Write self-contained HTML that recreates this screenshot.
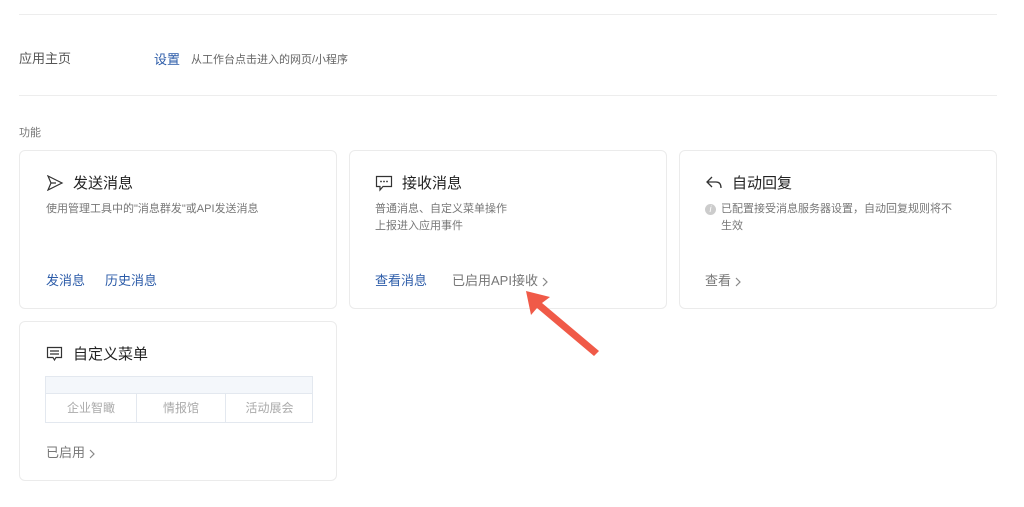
<!DOCTYPE html><html><head><meta charset="utf-8"><style>
body{margin:0;width:1024px;height:507px;background:#fff;font-family:"Liberation Sans","Noto Sans CJK SC",sans-serif;position:relative;overflow:hidden}
.a{position:absolute;white-space:nowrap}
.line{position:absolute;left:19px;width:978px;height:1px;background:#ededed}
.card{position:absolute;border:1px solid #ebebeb;border-radius:6px;box-sizing:border-box;width:318px}
.t{font-size:15px;color:#222}
.d{font-size:11px;color:#777;line-height:17px}
.l{font-size:13px;color:#2b5ba8}
.g{font-size:13px;color:#777}
.cv{display:inline-block;vertical-align:middle;margin-left:4px}
.cell{position:absolute;top:16px;height:30px;line-height:30px;text-align:center;font-size:12px;color:#aaa;border-left:1px solid #e3e8ef;box-sizing:border-box}
</style></head><body>
<div class="line" style="top:14px"></div>
<div class="line" style="top:95px"></div>
<div class="a" style="left:19px;top:48px;font-size:13px;color:#555">应用主页</div>
<div class="a" style="left:154px;top:49px;font-size:13px;color:#2b5ba8">设置</div>
<div class="a" style="left:191px;top:51px;font-size:11px;color:#666">从工作台点击进入的网页/小程序</div>
<div class="a" style="left:19px;top:124px;font-size:11px;color:#777">功能</div>

<div class="card" style="left:19px;top:150px;height:159px"></div>
<svg class="a" style="left:46px;top:175px" width="18" height="16" viewBox="0 0 18 16"><path d="M2 1 L16 8 L2 15 L5 8 Z M5 8 H10" fill="none" stroke="#333" stroke-width="1.2"/></svg>
<div class="a t" style="left:73px;top:172px">发送消息</div>
<div class="a d" style="left:46px;top:201px">使用管理工具中的"消息群发"或API发送消息</div>
<div class="a l" style="left:46px;top:270px">发消息</div>
<div class="a l" style="left:105px;top:270px">历史消息</div>

<div class="card" style="left:349px;top:150px;height:159px"></div>
<svg class="a" style="left:375px;top:175px" width="18" height="17" viewBox="0 0 18 17"><path d="M1.5 1.5 H16.5 V11.5 H8 L5 15 V11.5 H1.5 Z" fill="none" stroke="#333" stroke-width="1.2"/><circle cx="6" cy="6.5" r=".9" fill="#333"/><circle cx="9" cy="6.5" r=".9" fill="#333"/><circle cx="12" cy="6.5" r=".9" fill="#333"/></svg>
<div class="a t" style="left:402px;top:172px">接收消息</div>
<div class="a d" style="left:375px;top:201px">普通消息、自定义菜单操作<br>上报进入应用事件</div>
<div class="a l" style="left:375px;top:270px">查看消息</div>
<div class="a g" style="left:452px;top:270px">已启用API接收<svg class="cv" width="6" height="10" viewBox="0 0 6 10"><path d="M1 1 L5 5 L1 9" fill="none" stroke="#888" stroke-width="1.2"/></svg></div>

<div class="card" style="left:679px;top:150px;height:159px"></div>
<svg class="a" style="left:705px;top:175px" width="18" height="16" viewBox="0 0 18 16"><path d="M7 2 L2 7 L7 12 M2 7 H11 Q16 7 16 13" fill="none" stroke="#333" stroke-width="1.3"/></svg>
<div class="a t" style="left:732px;top:172px">自动回复</div>
<div class="a" style="left:705px;top:204px;width:11px;height:11px;border-radius:50%;background:#ccc;color:#fff;font-size:9px;line-height:11px;text-align:center;font-style:italic">i</div>
<div class="a d" style="left:721px;top:201px">已配置接受消息服务器设置，自动回复规则将不<br>生效</div>
<div class="a g" style="left:705px;top:270px">查看<svg class="cv" width="6" height="10" viewBox="0 0 6 10"><path d="M1 1 L5 5 L1 9" fill="none" stroke="#888" stroke-width="1.2"/></svg></div>

<div class="card" style="left:19px;top:321px;height:160px"></div>
<svg class="a" style="left:46px;top:346px" width="17" height="16" viewBox="0 0 17 16"><path d="M1.5 1.5 H15.5 V11.5 H10 L8.5 14 L7 11.5 H1.5 Z M4 5 H13 M4 8 H13" fill="none" stroke="#333" stroke-width="1.2"/></svg>
<div class="a t" style="left:73px;top:343px">自定义菜单</div>
<div class="a" style="left:45px;top:376px;width:268px;height:47px;border:1px solid #e3e8ef;box-sizing:border-box;background:#fff">
<div style="height:16px;background:#f4f7fb;border-bottom:1px solid #e3e8ef"></div>
<div class="cell" style="left:0;width:90px;border-left:none">企业智瞰</div>
<div class="cell" style="left:90px;width:89px">情报馆</div>
<div class="cell" style="left:179px;width:88px">活动展会</div>
</div>
<div class="a g" style="left:46px;top:442px">已启用<svg class="cv" width="6" height="10" viewBox="0 0 6 10"><path d="M1 1 L5 5 L1 9" fill="none" stroke="#888" stroke-width="1.2"/></svg></div>

<svg class="a" style="left:0;top:0" width="1024" height="507"><path d="M526 291 L550 297 L542 303 L599 351 L594 356 L537 308 L531 315 Z" fill="#f05a48"/></svg>
</body></html>
